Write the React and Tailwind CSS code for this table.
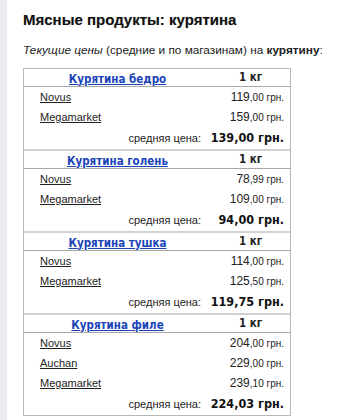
import React from 'react';

const SECTIONS = [
  {
    name: 'Курятина бедро',
    shops: [
      { shop: 'Novus', main: '119', frac: ',00' },
      { shop: 'Megamarket', main: '159', frac: ',00' },
    ],
    avg: '139,00 грн.',
  },
  {
    name: 'Курятина голень',
    shops: [
      { shop: 'Novus', main: '78', frac: ',99' },
      { shop: 'Megamarket', main: '109', frac: ',00' },
    ],
    avg: '94,00 грн.',
  },
  {
    name: 'Курятина тушка',
    shops: [
      { shop: 'Novus', main: '114', frac: ',00' },
      { shop: 'Megamarket', main: '125', frac: ',50' },
    ],
    avg: '119,75 грн.',
  },
  {
    name: 'Курятина филе',
    shops: [
      { shop: 'Novus', main: '204', frac: ',00' },
      { shop: 'Auchan', main: '229', frac: ',00' },
      { shop: 'Megamarket', main: '239', frac: ',10' },
    ],
    avg: '224,03 грн.',
  },
];

const wide = { fontFamily: '"DejaVu Sans Condensed", "DejaVu Sans", Verdana, sans-serif' };

export default function App() {
  return (
    <div
      className="flex h-[420px] w-[360px] overflow-hidden bg-white text-[#222]"
      style={{ fontFamily: '"Liberation Sans", Arial, sans-serif' }}
    >
      <div className="w-[7px] shrink-0 bg-[#ebebef]" />

      <div className="flex-1 pl-[16px]">
        {/* Title */}
        <h1 className="mt-[11px] text-[15px] font-bold leading-[18px] text-[#111] [text-shadow:0_0_1px_rgba(0,0,0,0.25)]">
          Мясные продукты: курятина
        </h1>

        <p className="mt-[14px] text-[11.8px] leading-[14px] text-[#222]">
          <i>Текущие цены</i> (средние и по магазинам) на <b>курятину</b>:
        </p>

        {/* Price table */}
        <div className="mt-[11px] w-[268px] border border-[#b8b8b8]">
          {SECTIONS.map((s, i) => (
            <div key={s.name} className={i > 0 ? 'border-t-2 border-[#d2d2d2]' : ''}>
              <div className="flex h-[18px] items-center border-b border-[#a8a8a8]">
                <div className="w-[187px] text-center">
                  <a
                    href="#"
                    className="whitespace-nowrap text-[11.5px] font-bold text-[#1a44b8] underline"
                    style={wide}
                  >
                    {s.name}
                  </a>
                </div>
                <div className="flex-1 text-center text-[11.5px] font-bold" style={wide}>
                  1 кг
                </div>
              </div>

              {s.shops.map((r) => (
                <div key={r.shop} className="flex h-[20px] items-center pl-[16px] pr-[6px]">
                  <a href="#" className="flex-1 text-[11px] text-[#222] underline">
                    {r.shop}
                  </a>
                  <span className="whitespace-nowrap text-[12px] text-[#222]">
                    {r.main}
                    <span className="text-[10px]">{r.frac} грн.</span>
                  </span>
                </div>
              ))}

              <div className="flex h-[22px] items-center pr-[6px]">
                <div className="w-[177px] whitespace-nowrap text-right text-[11px] text-[#222]">
                  средняя цена:
                </div>
                <div
                  className="flex-1 whitespace-nowrap text-right text-[12.5px] font-bold text-[#111]"
                  style={wide}
                >
                  {s.avg}
                </div>
              </div>
            </div>
          ))}
        </div>
      </div>
    </div>
  );
}
